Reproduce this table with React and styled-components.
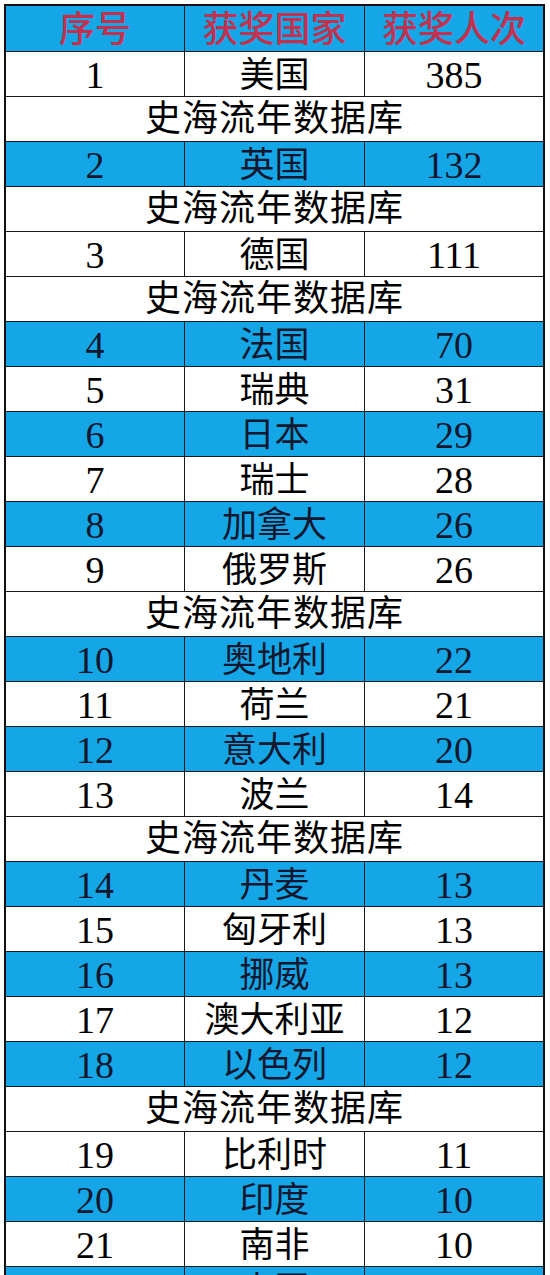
import React from "react";
import styled, { createGlobalStyle } from "styled-components";

const Global = createGlobalStyle`
  html, body {
    margin: 0;
    padding: 0;
    background: #ffffff;
    overflow: hidden;
  }
  * {
    box-sizing: border-box;
  }
`;

const Page = styled.div`
  padding: 4px 0 0 4px;
  width: 550px;
  height: 1275px;
  overflow: hidden;
  font-family: "Liberation Serif", "Noto Sans CJK SC", serif;
`;

const Sheet = styled.div`
  width: 541px;
  border-left: 2px solid #111;
  border-right: 2px solid #111;
  border-top: 2px solid #111;
`;

const Row = styled.div`
  display: grid;
  grid-template-columns: ${(p) => (p.$merged ? "1fr" : "179px 180px 1fr")};
  height: ${(p) => (p.$head ? "46px" : "45px")};
  background: ${(p) => (p.$blue ? "#14a6e6" : "#ffffff")};
  border-bottom: 1px solid #1a1a1a;
`;

const Cell = styled.div`
  display: flex;
  align-items: center;
  justify-content: center;
  border-right: ${(p) => (p.$last ? "none" : "1px solid #1a1a1a")};
  font-size: ${(p) => (p.$num ? "38px" : p.$head ? "36px" : "35px")};
  font-weight: ${(p) => (p.$head ? 500 : 400)};
  line-height: 1;
  color: ${(p) => (p.$head ? "#c3314f" : p.$blue ? "#15172e" : "#000")};
  white-space: nowrap;
  overflow: hidden;
  padding-top: 2px;
`;

const Banner = styled.div`
  display: flex;
  align-items: center;
  justify-content: center;
  font-size: 36px;
  letter-spacing: 1px;
  color: #000;
  line-height: 1;
`;

const data = [
  [1, "美国", 385, true],
  [2, "英国", 132, true],
  [3, "德国", 111, true],
  [4, "法国", 70],
  [5, "瑞典", 31],
  [6, "日本", 29],
  [7, "瑞士", 28],
  [8, "加拿大", 26],
  [9, "俄罗斯", 26, true],
  [10, "奥地利", 22],
  [11, "荷兰", 21],
  [12, "意大利", 20],
  [13, "波兰", 14, true],
  [14, "丹麦", 13],
  [15, "匈牙利", 13],
  [16, "挪威", 13],
  [17, "澳大利亚", 12],
  [18, "以色列", 12, true],
  [19, "比利时", 11],
  [20, "印度", 10],
  [21, "南非", 10],
  [22, "中国", 8],
];

const App = () => (
  <Page>
    <Global />
    <Sheet>
      <Row $head $blue>
        <Cell $head>序号</Cell>
        <Cell $head>获奖国家</Cell>
        <Cell $head $last>获奖人次</Cell>
      </Row>
      {data.map(([n, name, count, banner]) => {
        const isBlue = n % 2 === 0;
        return (
          <React.Fragment key={n}>
            <Row $blue={isBlue}>
              <Cell $num $blue={isBlue}>{n}</Cell>
              <Cell $blue={isBlue}>{name}</Cell>
              <Cell $num $blue={isBlue} $last>{count}</Cell>
            </Row>
            {banner && (
              <Row $merged>
                <Banner>史海流年数据库</Banner>
              </Row>
            )}
          </React.Fragment>
        );
      })}
    </Sheet>
  </Page>
);

export default App;
